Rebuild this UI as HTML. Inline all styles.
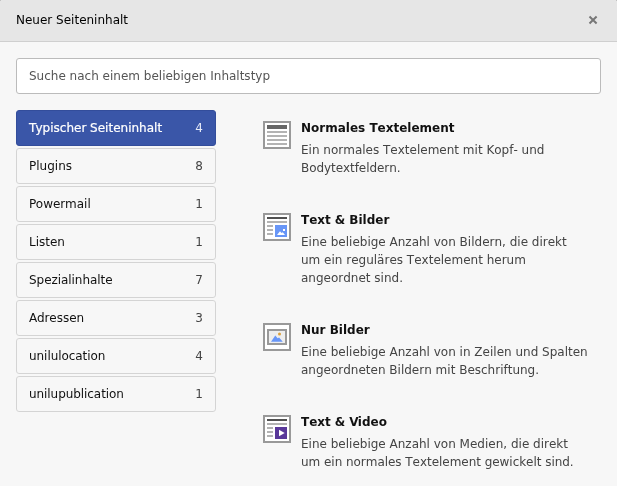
<!DOCTYPE html>
<html lang="de">
<head>
<meta charset="utf-8">
<title>Neuer Seiteninhalt</title>
<style>
*{box-sizing:border-box;margin:0;padding:0}
html,body{width:617px;height:486px;overflow:hidden;background:#f7f7f7}
body{font-family:"DejaVu Sans","Liberation Sans",sans-serif;font-size:12px;color:#111;position:relative}
#w{position:absolute;left:0;top:0;width:617px;height:486px;will-change:transform}
.hdr{position:absolute;left:0;top:0;width:617px;height:42px;background:#e6e6e6;border-bottom:1px solid #cfcfcf}
.c{position:absolute;top:0;width:1px;height:1px;background:#c2c2c2}
.hdr .t{position:absolute;left:16px;top:12px;font-size:12px;line-height:16px;color:#000}
.hdr .x{position:absolute;left:588px;top:15px;width:10px;height:10px}
.search{position:absolute;left:16px;top:58px;width:585px;height:36px;background:#fff;border:1px solid #bbb;border-radius:3px}
.search span{position:absolute;left:12px;top:9px;font-size:12px;line-height:16px;color:#555}
.nav a{position:absolute;left:16px;width:200px;height:36px;border:1px solid #d4d4d4;border-radius:3px;background:#f7f7f7;display:block;color:#111}
.nav a span{position:absolute;left:12px;top:9px;line-height:16px;font-size:12px}
.nav a b{position:absolute;right:12px;top:9px;line-height:16px;font-weight:normal;font-size:12px;color:#444}
.nav a.act{background:#3a56a8;border-color:#334d9b;color:#fff}
.nav a.act span{-webkit-text-stroke:.22px #fff;font-kerning:none}
.nav a.act b{color:#e6eaf6}
.nav a.act span i{font-style:normal;letter-spacing:-.85px}
.it{position:absolute;left:263px}
.it svg{position:absolute;left:0;top:0;width:28px;height:28px}
.it h3 i{font-style:normal}
.it h3{position:absolute;left:38px;top:-1px;font-size:12px;line-height:16px;font-weight:bold;color:#111;white-space:nowrap;font-kerning:none}
.it p{position:absolute;left:38px;top:20px;font-size:12px;line-height:18px;color:#444;white-space:nowrap;font-kerning:none}
</style>
</head>
<body>
<div id="w">
<div class="hdr"><i class="c" style="left:0"></i><i class="c" style="left:616px"></i><div class="t">Neuer Seiteninhalt</div>
<svg class="x" viewBox="0 0 10 10"><path d="M1.5 1.5L8.6 8.5M8.6 1.5L1.5 8.5" stroke="#777" stroke-width="2" fill="none"/></svg>
</div>
<div class="search"><span>Suche nach einem beliebigen Inhaltstyp</span></div>
<div class="nav">
<a class="act" style="top:110px"><span><i>T</i>ypischer Seiteninhalt</span><b>4</b></a>
<a style="top:148px"><span>Plugins</span><b>8</b></a>
<a style="top:186px"><span>Powermail</span><b>1</b></a>
<a style="top:224px"><span>Listen</span><b>1</b></a>
<a style="top:262px"><span style="letter-spacing:-.05px">Spezialinhalte</span><b>7</b></a>
<a style="top:300px"><span>Adressen</span><b>3</b></a>
<a style="top:338px"><span style="letter-spacing:-.055px">unilulocation</span><b>4</b></a>
<a style="top:376px"><span style="letter-spacing:-.065px">unilupublication</span><b>1</b></a>
</div>

<div class="it" style="top:121px">
<svg viewBox="0 0 28 28"><path fill="#fff" d="M0 0h28v28H0z"/><path fill="#999" d="M0 0h28v28H0zM2 2v24h24V2z" fill-rule="evenodd"/><path fill="#666" d="M4 4h20v4H4z"/><path fill="#b3b3b3" d="M4 10h20v2H4zM4 14h20v2H4zM4 18h20v2H4zM4 22h20v2H4z"/></svg>
<h3>Normales Textelement</h3>
<p>Ein normales Textelement mit Kopf- und<br><span style="letter-spacing:-.06px">Bodytextfeldern.</span></p>
</div>

<div class="it" style="top:213px">
<svg viewBox="0 0 28 28"><path fill="#fff" d="M0 0h28v28H0z"/><path fill="#999" d="M0 0h28v28H0zM2 2v24h24V2z" fill-rule="evenodd"/><path fill="#505050" d="M4 4h20v2H4z"/><path fill="#b3b3b3" d="M4 8h20v2H4zM4 12h6v2H4zM4 16h6v2H4zM4 20h6v2H4z"/><path fill="#6896f7" d="M12 12h12v12H12z"/><path fill="#fff" d="M14 22l3-3.8 1.5 1.7 1.3-.7 2.2 2.8zM20 16h2v2h-2z"/></svg>
<h3>Tex<i style="letter-spacing:-.3px">t</i> &amp; Bilder</h3>
<p>Eine beliebige Anzahl von Bildern, die direkt<br>um ein reguläres Textelement herum<br>angeordnet sind.</p>
</div>

<div class="it" style="top:323px">
<svg viewBox="0 0 28 28"><path fill="#fff" d="M0 0h28v28H0z"/><path fill="#999" d="M0 0h28v28H0zM2 2v24h24V2z" fill-rule="evenodd"/><path fill="#999" d="M4 6h20v16H4z"/><path fill="#eee" d="M6 8h16v12H6z"/><path fill="#6896f7" d="M8 18.8l4.3-6.3 2.3 2.8 1.5-.8 3.7 4.3z"/><circle fill="#dba03a" cx="16.5" cy="11" r="1.5"/></svg>
<h3>Nur Bilder</h3>
<p>Eine beliebige Anzahl von in Zeilen und Spalten<br>angeordneten Bildern mit Beschriftung.</p>
</div>

<div class="it" style="top:415px">
<svg viewBox="0 0 28 28"><path fill="#fff" d="M0 0h28v28H0z"/><path fill="#999" d="M0 0h28v28H0zM2 2v24h24V2z" fill-rule="evenodd"/><path fill="#505050" d="M4 4h20v2H4z"/><path fill="#b3b3b3" d="M4 8h20v2H4zM4 12h6v2H4zM4 16h6v2H4zM4 20h6v2H4z"/><path fill="#59389a" d="M12 12h12v12H12z"/><path fill="#fff" d="M16 14.8l5.7 3.2-5.7 3.2z"/></svg>
<h3>Tex<i style="letter-spacing:-.3px">t</i> &amp; <i style="letter-spacing:-.8px">V</i>ideo</h3>
<p>Eine beliebige Anzahl von Medien, die direkt<br><span style="letter-spacing:-.04px">um ein normales Textelement gewickelt sind.</span></p>
</div>
</div>
</body>
</html>
